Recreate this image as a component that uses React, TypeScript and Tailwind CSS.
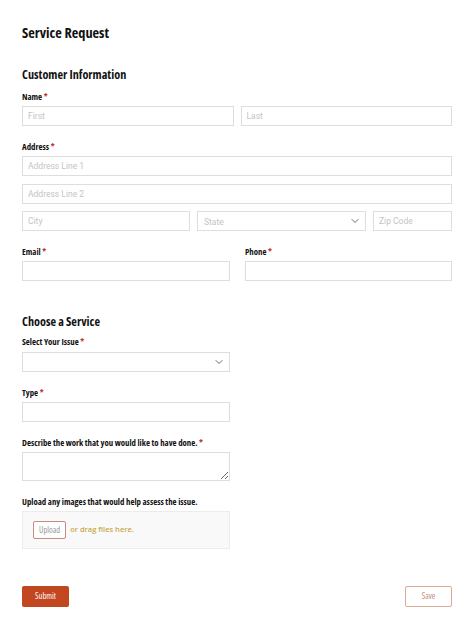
import { ChevronDown } from 'lucide-react'

const head = "font-['Open_Sans',sans-serif] [font-stretch:75%] font-bold text-[#111]"
const input =
    "block w-full h-[20px] border border-[#dedede] bg-white px-[5px] font-['Roboto',sans-serif] text-[8.5px] text-[#333] placeholder:text-[#c4c4c4] outline-none"

function Label({ text, required = true }: { text: string; required?: boolean }) {
    return (
        <div className={`${head} text-[8.8px] leading-[12px] mb-[3px]`}>
            {text}
            {required && <span className="text-[#c0392b]"> *</span>}
        </div>
    )
}

function Select({ placeholder }: { placeholder?: string }) {
    return (
        <div className="relative h-[20px] w-full border border-[#dedede] bg-white">
            <span className="absolute left-[6px] top-[4px] font-['Roboto',sans-serif] text-[8.5px] text-[#c4c4c4]">
                {placeholder}
            </span>
            <ChevronDown className="absolute right-[4px] top-[3px] w-[12px] h-[12px] text-[#444]" strokeWidth={1.6} />
        </div>
    )
}

export default function App() {
    return (
        <div className="w-[474px] min-h-[629px] bg-white pl-[22px] pt-[23px] pb-[22px]">
            <div className="w-[430px]">
                <h1 className={`${head} text-[14.3px] leading-[20px]`}>Service Request</h1>

                <h2 className={`${head} text-[12.2px] leading-[18px] mt-[23px]`}>Customer Information</h2>

                <div className="mt-[7px]">
                    <Label text="Name" />
                    <div className="flex gap-[7px]">
                        <input className={input} placeholder="First" />
                        <input className={input} placeholder="Last" />
                    </div>
                </div>

                <div className="mt-[15px]">
                    <Label text="Address" />
                    <input className={input} placeholder="Address Line 1" />
                    <input className={`${input} mt-[8px]`} placeholder="Address Line 2" />
                    <div className="flex gap-[7px] mt-[7px]">
                        <div className="w-[168px] shrink-0">
                            <input className={input} placeholder="City" />
                        </div>
                        <div className="w-[169px] shrink-0">
                            <Select placeholder="State" />
                        </div>
                        <div className="flex-1">
                            <input className={input} placeholder="Zip Code" />
                        </div>
                    </div>
                </div>

                <div className="flex gap-[15px] mt-[15px]">
                    <div className="w-[208px]">
                        <Label text="Email" />
                        <input className={input} />
                    </div>
                    <div className="flex-1">
                        <Label text="Phone" />
                        <input className={input} />
                    </div>
                </div>

                <h2 className={`${head} text-[12.2px] leading-[18px] mt-[32px]`}>Choose a Service</h2>

                <div className="w-[208px]">
                    <div className="mt-[5px]">
                        <Label text="Select Your Issue" />
                        <div className="pt-[1px]">
                            <Select />
                        </div>
                    </div>

                    <div className="mt-[15px]">
                        <Label text="Type" />
                        <input className={input} />
                    </div>
                </div>

                <div className="mt-[15px]">
                    <Label text="Describe the work that you would like to have done." />
                    <textarea className="block w-[208px] h-[29px] border border-[#dedede] bg-white outline-none resize-y" />
                </div>

                <div className="mt-[15px]">
                    <Label text="Upload any images that would help assess the issue." required={false} />
                    <div className="w-[208px] h-[38px] border border-[#ececec] bg-[#f9f9f9] flex items-center pl-[10px] gap-[4px]">
                        <button className={`${head} font-normal text-[8.5px] text-[#999] h-[18px] px-[5px] border border-[#c98a82] rounded-[2px] bg-white`}>
                            Upload
                        </button>
                        <span className="font-['Open_Sans',sans-serif] font-semibold text-[7.5px] text-[#c9a94f]">
                            or drag files here.
                        </span>
                    </div>
                </div>

                <div className="flex justify-between items-center mt-[37px]">
                    <button className={`${head} font-normal text-[8.5px] text-white w-[47px] h-[21px] bg-[#c2461f] rounded-[2px]`}>
                        Submit
                    </button>
                    <button className={`${head} font-normal text-[8.5px] text-[#c98a7a] w-[47px] h-[21px] border border-[#dcaa98] rounded-[2px] bg-white`}>
                        Save
                    </button>
                </div>
            </div>
        </div>
    )
}
